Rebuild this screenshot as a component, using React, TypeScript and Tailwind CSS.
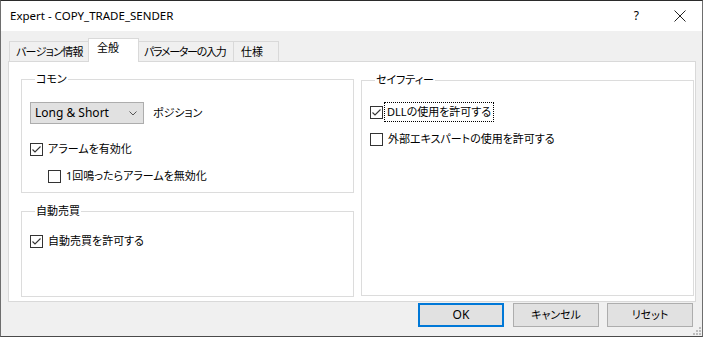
import React from 'react';

const FONT = "font-['Noto_Sans','Noto_Sans_CJK_JP',sans-serif] [font-feature-settings:'palt']";

const TABS = [
  { label: 'バージョン情報', w: 'w-[80px] pl-[6px] tracking-[-0.7px]' },
  { label: '全般', w: 'w-[51px] pl-[8px]', active: true },
  { label: 'パラメーターの入力', w: 'w-[96px] pl-[5px] tracking-[-1.3px]' },
  { label: '仕様', w: 'w-[46px] pl-[7px]' },
];

const CheckBox: React.FC<{ checked?: boolean }> = ({ checked }) => (
  <span className="w-[13px] h-[13px] border border-[#333333] bg-white flex items-center justify-center shrink-0">
    {checked && (
      <svg width="11" height="11" viewBox="0 0 11 11">
        <path d="M1.5 5.5 L4 8 L9.5 2.5" fill="none" stroke="#333" strokeWidth="1.1" />
      </svg>
    )}
  </span>
);

const Option: React.FC<{ label: string; checked?: boolean; focused?: boolean; className?: string }> = ({
  label,
  checked,
  focused,
  className = '',
}) => (
  <div className={`flex items-center h-[16px] leading-[16px] whitespace-nowrap ${className}`}>
    <CheckBox checked={checked} />
    {focused ? (
      <span className="ml-[3px] px-[1px] leading-[16px] outline outline-1 outline-dotted outline-black outline-offset-[1px]">
        {label}
      </span>
    ) : (
      <span className="ml-[5px]">{label}</span>
    )}
  </div>
);

const Group: React.FC<{ title: string; className: string; children: React.ReactNode }> = ({
  title,
  className,
  children,
}) => (
  <fieldset className={`border border-[#dcdcdc] pl-[8px] ${className}`}>
    <legend className="ml-[5px] px-[1px] leading-[16px] whitespace-nowrap">{title}</legend>
    {children}
  </fieldset>
);

export default function App() {
  return (
    <div
      className={`${FONT} w-[703px] h-[337px] flex flex-col bg-[#f0f0f0] text-[11px] text-black border-t border-t-[#2b2b2b] border-x border-b border-x-[#6e6e6e] border-b-[#4a4a4a]`}
    >
      {/* title bar */}
      <div className="h-[30px] bg-white flex items-center pl-[9px] shrink-0">
        <span className="leading-[16px] text-[11.5px]">Expert - COPY_TRADE_SENDER</span>
        <span className="ml-auto leading-[16px] text-[12px]">?</span>
        <svg className="ml-[35px] mr-[16px]" width="12" height="12" viewBox="0 0 12 12">
          <path d="M0.5 0.5 L11.5 11.5 M11.5 0.5 L0.5 11.5" stroke="#222" strokeWidth="1" />
        </svg>
      </div>

      <div className="flex-1 flex flex-col pl-[7px] pr-[6px]">
        {/* tabs */}
        <div className="mt-[7px] h-[23px] flex items-end pl-[1px] whitespace-nowrap">
          {TABS.map((t, i) =>
            t.active ? (
              <div
                key={t.label}
                className={`${t.w} -ml-px relative z-10 h-[24px] -mb-px bg-white border border-b-0 border-[#d9d9d9] leading-[18px]`}
              >
                {t.label}
              </div>
            ) : (
              <div
                key={t.label}
                className={`${t.w} ${i > 0 ? '-ml-px' : ''} h-[20px] bg-[#f0f0f0] border border-b-0 border-[#d9d9d9] leading-[19px] overflow-hidden`}
              >
                {t.label}
              </div>
            )
          )}
        </div>

        {/* panel */}
        <div className="h-[241px] bg-white border border-[#d9d9d9] flex pl-[12px] pr-[1px] pt-[9px]">
          <div className="w-[333px] flex flex-col">
            <Group title="コモン" className="h-[122px]">
              <div className="mt-[15px] flex items-center">
                <div className="w-[114px] h-[22px] bg-[#e1e1e1] border border-[#adadad] flex items-center pl-[4px] pr-[6px]">
                  <span className="leading-[16px] text-[12px]">Long &amp; Short</span>
                  <svg className="ml-auto" width="8" height="5" viewBox="0 0 8 5">
                    <path d="M0.5 0.5 L4 4 L7.5 0.5" fill="none" stroke="#555" strokeWidth="1" />
                  </svg>
                </div>
                <span className="ml-[9px] leading-[16px]">ポジション</span>
              </div>
              <Option className="mt-[17px]" label="アラームを有効化" checked />
              <Option className="mt-[11px] ml-[18px]" label="1回鳴ったらアラームを無効化" />
            </Group>
            <Group title="自動売買" className="mt-[10px] h-[94px]">
              <Option className="mt-[14px]" label="自動売買を許可する" checked />
            </Group>
          </div>

          <div className="w-[333px] ml-[7px]">
            <Group title="セイフティー" className="mt-[1px] h-[224px]">
              <Option className="mt-[16px]" label="DLLの使用を許可する" checked focused />
              <Option className="mt-[11px]" label="外部エキスパートの使用を許可する" />
            </Group>
          </div>
        </div>

        {/* buttons */}
        <div className="mt-px flex justify-end pr-[3px] relative">
          <button className="w-[86px] h-[24px] bg-[#e1e1e1] border-2 border-[#0078d7] leading-[16px] text-[12px]">OK</button>
          <button className="ml-[9px] w-[86px] h-[24px] bg-[#e1e1e1] border border-[#adadad] leading-[16px]">
            キャンセル
          </button>
          <button className="ml-[8px] w-[86px] h-[24px] bg-[#e1e1e1] border border-[#adadad] leading-[16px]">
            リセット
          </button>
        </div>
        <div className="flex-1 flex justify-end items-end -mr-[5px] pb-[1px]">
          <svg width="8" height="8" viewBox="0 0 8 8">
            {[
              [6, 0],
              [6, 3],
              [3, 3],
              [6, 6],
              [3, 6],
              [0, 6],
            ].map(([x, y]) => (
              <rect key={`${x}-${y}`} x={x} y={y} width="2" height="2" fill="#bcbcbc" />
            ))}
          </svg>
        </div>
      </div>
    </div>
  );
}
